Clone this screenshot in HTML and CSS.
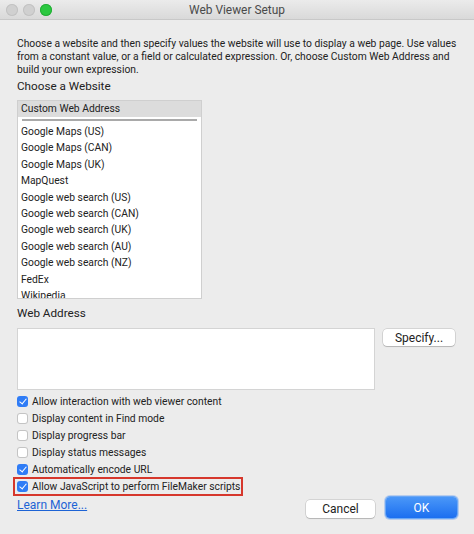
FILE: index.html
```html
<!DOCTYPE html>
<html lang="en">
<head>
    <meta charset="UTF-8">
    <title>Web Viewer Setup</title>
    <link rel="stylesheet" href="styles.css">
</head>
<body>

    <div class="window">
        <div class="titlebar">
            <div class="lights">
                <span class="light"></span>
                <span class="light"></span>
                <span class="light green"></span>
            </div>
            <div class="title">Web Viewer Setup</div>
        </div>

        <div class="content">
            <p class="intro">Choose a website and then specify values the website will use to display a web page. Use values from a constant value, or a field or calculated expression. Or, choose Custom Web Address and build your own expression.</p>

            <h2 class="section">Choose a Website</h2>
            <div class="list">
                <div class="item selected">Custom Web Address</div>
                <div class="sep"></div>
                <div class="item">Google Maps (US)</div>
                <div class="item">Google Maps (CAN)</div>
                <div class="item">Google Maps (UK)</div>
                <div class="item">MapQuest</div>
                <div class="item">Google web search (US)</div>
                <div class="item">Google web search (CAN)</div>
                <div class="item">Google web search (UK)</div>
                <div class="item">Google web search (AU)</div>
                <div class="item">Google web search (NZ)</div>
                <div class="item">FedEx</div>
                <div class="item">Wikipedia</div>
            </div>

            <h2 class="section addr-label">Web Address</h2>
            <div class="addr-row">
                <div class="textbox"></div>
                <button type="button" class="btn specify">Specify...</button>
            </div>

            <div class="options">
                <label class="check"><span class="box on"></span>Allow interaction with web viewer content</label>
                <label class="check"><span class="box"></span>Display content in Find mode</label>
                <label class="check"><span class="box"></span>Display progress bar</label>
                <label class="check"><span class="box"></span>Display status messages</label>
                <label class="check"><span class="box on"></span>Automatically encode URL</label>
                <label class="check marked"><span class="box on"></span>Allow JavaScript to perform FileMaker scripts</label>
            </div>

            <div class="footer">
                <a href="#" class="learn">Learn More...</a>
                <div class="buttons">
                    <button type="button" class="btn cancel">Cancel</button>
                    <button type="button" class="btn ok">OK</button>
                </div>
            </div>
        </div>
    </div>

</body>
</html>
```

FILE: styles.css
```css
/* Dasar jendela dialog */
body {
    margin: 0;
    background: #ececec;
    font-family: Roboto, "Liberation Sans", Arial, sans-serif;
    color: #222;
}

.window {
    width: 474px;
    height: 534px;
    background: #ececec;
    overflow: hidden;
}

/* Bilah judul */
.titlebar {
    height: 19px;
    border-bottom: 1px solid #c8c8c8;
    background: linear-gradient(#ebebeb, #d9d9d9);
    display: flex;
    align-items: center;
    position: relative;
}

.lights {
    display: flex;
    gap: 5px;
    padding-left: 6px;
}

.light {
    width: 12px;
    height: 12px;
    border-radius: 50%;
    background: #d0d0d0;
    box-shadow: inset 0 0 0 1px #c2c2c2;
}

.light.green {
    background: #2bc840;
    box-shadow: inset 0 0 0 1px #25ad37;
}

.title {
    position: absolute;
    left: 0;
    right: 0;
    text-align: center;
    font-size: 11.9px;
    color: #4a4a4a;
}

/* Isi */
.content {
    padding: 0 17px;
}

.intro {
    margin: 17px 0 0;
    font-size: 10.3px;
    line-height: 13px;
    color: #222;
}

.section {
    margin: 2px 0 0;
    font-size: 11.7px;
    font-weight: normal;
    line-height: 16px;
    color: #222;
}

/* Daftar situs */
.list {
    width: 183px;
    height: 197px;
    margin-top: 6px;
    background: #fff;
    border: 1px solid #cfcfcf;
    overflow: hidden;
    font-size: 10.3px;
}

.item {
    height: 16.4px;
    line-height: 16.4px;
    padding-left: 3px;
    white-space: nowrap;
}

.item.selected {
    height: 16px;
    line-height: 16px;
    background: #dcdcdc;
}

.sep {
    height: 2px;
    margin: 2px 4px 3px;
    background: #a9a9a9;
}

.addr-label {
    margin-top: 6px;
}

.addr-row {
    display: flex;
    align-items: flex-start;
    gap: 8px;
    margin-top: 7px;
}

.textbox {
    width: 356px;
    height: 60px;
    background: #fff;
    border: 1px solid #d4d4d4;
}

/* Tombol */
.btn {
    font-family: inherit;
    font-size: 12px;
    color: #222;
    background: #fff;
    border: none;
    border-radius: 4px;
    box-shadow: 0 0 0 0.5px rgba(0, 0, 0, 0.2), 0 1px 1px rgba(0, 0, 0, 0.15);
    padding: 0;
    cursor: pointer;
}

.specify {
    width: 72px;
    height: 17px;
    margin-top: 1px;
}

/* Kotak centang */
.options {
    margin-top: 3px;
    display: flex;
    flex-direction: column;
}

.check {
    display: flex;
    align-items: center;
    gap: 4px;
    height: 17px;
    font-size: 10.3px;
    white-space: nowrap;
}

.box {
    width: 11px;
    height: 11px;
    border-radius: 3px;
    background: #fff;
    box-shadow: inset 0 0 0 1px #c4c4c4;
    position: relative;
    flex: none;
}

.box.on {
    background: #2f7cf6;
    box-shadow: none;
}

.box.on::after {
    content: "";
    position: absolute;
    left: 3.5px;
    top: 1px;
    width: 3px;
    height: 6px;
    border: solid #fff;
    border-width: 0 1.6px 1.6px 0;
    transform: rotate(40deg);
}

.check.marked {
    width: 225px;
    margin-left: -3px;
    padding-left: 3px;
    outline: 2px solid #d6372c;
    outline-offset: -1px;
}

/* Bagian bawah */
.footer {
    display: flex;
    justify-content: space-between;
    align-items: flex-start;
    margin-top: 2px;
}

.learn {
    font-size: 12px;
    color: #1d63d5;
    margin-top: 1px;
}

.buttons {
    display: flex;
    gap: 11px;
    align-items: center;
}

.cancel {
    width: 69px;
    height: 18px;
    margin-top: 2px;
}

.ok {
    width: 71px;
    height: 21px;
    color: #fff;
    background: linear-gradient(#4a97f8, #1c6ff0);
    box-shadow: 0 0 0 1px #6aa7f5, 0 0 0 2px rgba(90, 150, 240, 0.35);
}
```
